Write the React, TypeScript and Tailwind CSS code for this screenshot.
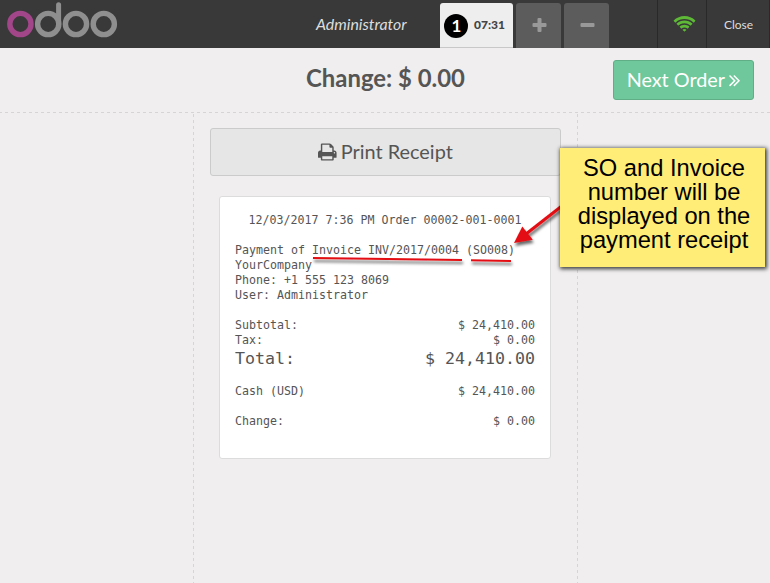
import React from "react";

function Logo() {
  return (
    <svg className="block h-12 w-[125px]" viewBox="0 0 125 48" fill="none" strokeWidth="5.4">
      <g stroke="#8f8f8f">
        <circle cx="48.2" cy="24" r="10.6" />
        <circle cx="76" cy="24" r="10.6" />
        <circle cx="103.8" cy="24" r="10.6" />
        <path d="M58.6 4.8V24" strokeWidth="5" strokeLinecap="round" />
      </g>
      <circle cx="20.4" cy="24" r="10.6" stroke="#a24689" />
    </svg>
  );
}

function PrintIcon() {
  return (
    <svg className="h-5 w-[18.57px] shrink-0" viewBox="0 0 1664 1792" fill="currentColor">
      <path d="M384 1536h896v-256h-896v256zM384 896h896v-384h-160q-40 0-68-28t-28-68v-160h-640v640zM1536 960q0-26-19-45t-45-19-45 19-19 45 19 45 45 19 45-19 19-45zM1664 960v416q0 13-9.5 22.5t-22.5 9.5h-224v160q0 40-28 68t-68 28h-960q-40 0-68-28t-28-68v-160h-224q-13 0-22.500-9.500t-9.500-22.500v-416q0-79 56.500-135.500t135.500-56.500h64v-544q0-40 28-68t68-28h672q40 0 88 20t76 48l152 152q28 28 48 76t20 88v256h64q79 0 135.500 56.500t56.500 135.500z" />
    </svg>
  );
}

function AngleIcon() {
  return (
    <svg className="h-5 w-[11.43px] shrink-0" viewBox="0 0 1024 1792" fill="currentColor">
      <path d="M595 960q0 13-10 23l-466 466q-10 10-23 10t-23-10l-50-50q-10-10-10-23t10-23l393-393-393-393q-10-10-10-23t10-23l50-50q10-10 23-10t23 10l466 466q10 10 10 23zM979 960q0 13-10 23l-466 466q-10 10-23 10t-23-10l-50-50q-10-10-10-23t10-23l393-393-393-393q-10-10-10-23t10-23l50-50q10-10 23-10t23 10l466 466q10 10 10 23z" />
    </svg>
  );
}

function WifiIcon() {
  return (
    <svg className="mt-0.5 h-5 w-[25px]" viewBox="0 0 2240 1792" fill="#5eb937">
      <path d="M1120 1491q-20 0-93-73.500t-73-93.500q0-32 62.500-54t103.500-22 103.500 22 62.500 54q0 20-73 93.500t-93 73.500zM1390 1221q-2 0-40-25t-101.500-50-128.500-25-128.500 25-101 50-40.500 25q-18 0-93.500-75t-75.500-93q0-13 10-23 78-77 196-121t233-44 233 44 196 121q10 10 10 23 0 18-75.500 93t-93.500 75zM1662 950q-11 0-23-8-136-105-252-154.500t-268-49.500q-85 0-170.500 22t-149 53-113.500 62-79 53-31 22q-17 0-92-75t-75-93q0-12 10-22 132-132 320-205t380-73 380 73 320 205q10 10 10 22 0 18-75 93t-92 75zM1936 677q-11 0-22-9-179-157-371.500-236.500t-420.500-79.500-420.500 79.500-371.500 236.500q-11 9-22 9-17 0-92.500-75t-75.500-93q0-13 10-23 187-186 445-288t527-102 527 102 445 288q10 10 10 23 0 18-75.500 93t-92.500 75z" />
    </svg>
  );
}

function Header() {
  return (
    <header className="flex h-12 bg-[#393939] text-[#ddd]">
      <div className="w-[316px]">
        <Logo />
      </div>
      <div className="flex w-[124px] items-center pb-px text-[15.9px] italic">Administrator</div>
      <div className="flex flex-1 items-end gap-[3px]">
        <div className="flex h-[45px] w-[73px] items-center rounded-t-[3px] border-b border-[#c8c8c8] bg-[#eee] pl-1 text-[#444]">
          <span className="mt-0.5 flex size-6 items-center justify-center rounded-full bg-black pl-px text-[17px] font-bold text-white">
            1
          </span>
          <span className="ml-1.5 text-[12px] font-black">07:31</span>
        </div>
        <div className="flex h-[45px] w-[45px] items-center justify-center rounded-t-[3px] bg-[#5c5c5c] pl-px">
          <svg className="size-[15px]" viewBox="0 0 15 15" fill="#999">
            <rect x="0.5" y="5" width="14" height="4" rx="1" />
            <rect x="5.5" y="0" width="4" height="14" rx="1" />
          </svg>
        </div>
        <div className="flex h-[45px] w-[45px] items-center justify-center rounded-t-[3px] bg-[#5c5c5c] pl-px">
          <svg className="size-[15px]" viewBox="0 0 15 15" fill="#999">
            <rect x="0.5" y="5" width="14" height="4" rx="1" />
          </svg>
        </div>
      </div>
      <div className="flex w-[49px] items-center justify-center border-l border-[#292929] pl-1">
        <WifiIcon />
      </div>
      <div className="flex w-16 items-center justify-center border-x border-[#292929] pt-px pl-px text-xs">Close</div>
    </header>
  );
}

function Row({ label, value }: { label: string; value: string }) {
  return (
    <div className="flex justify-between">
      <span>{label}</span>
      <span>{value}</span>
    </div>
  );
}

function Receipt() {
  return (
    <section className="mt-5 mr-[10px] ml-[9px] h-[263px] rounded-[3px] border border-[#dcdcdc] bg-white px-[15px] pt-4 font-['DejaVu_Sans_Mono',monospace] text-[11.63px] leading-[15px] whitespace-pre text-[#555]">
      <p className="text-center">12/03/2017 7:36 PM Order 00002-001-0001</p>
      <div className="mt-[15px]">
        <p>Payment of Invoice INV/2017/0004 (SO008)</p>
        <p>YourCompany</p>
        <p>Phone: +1 555 123 8069</p>
        <p>User: Administrator</p>
      </div>
      <div className="mt-[15px]">
        <Row label="Subtotal:" value="$ 24,410.00" />
        <Row label="Tax:" value="$ 0.00" />
        <div className="text-[16.61px] leading-[21px]">
          <Row label="Total:" value="$ 24,410.00" />
        </div>
      </div>
      <div className="mt-[15px]">
        <Row label="Cash (USD)" value="$ 24,410.00" />
      </div>
      <div className="mt-[15px]">
        <Row label="Change:" value="$ 0.00" />
      </div>
    </section>
  );
}

function Annotations() {
  return (
    <>
      <svg className="absolute top-0 left-0 h-[583px] w-[770px]" viewBox="0 0 770 583">
        <defs>
          <filter id="mark-shadow" x="0" y="0" width="770" height="583" filterUnits="userSpaceOnUse">
            <feDropShadow dx="1" dy="3" stdDeviation="1.8" floodColor="#000" floodOpacity="0.6" />
          </filter>
        </defs>
        <g filter="url(#mark-shadow)" stroke="#e40d12" strokeWidth="2">
          <path d="M313 258L462 260M471 260.2L511 261" />
          <path d="M565 203.500L526 234" strokeWidth="3" />
          <path d="M514 243L522.300 226.500L532.800 239.800Z" fill="#e40d12" stroke="none" />
        </g>
      </svg>
      <div className="absolute top-[148px] left-[560px] h-[119px] w-[205px] bg-[#ffed77] pt-2 pl-[3px] text-center font-['Liberation_Sans',Arial,sans-serif] text-[23.7px] leading-6 text-black shadow-[1px_1px_4px_1px_rgba(0,0,0,0.75)]">
        SO and Invoice
        <br />
        number will be
        <br />
        displayed on the
        <br />
        payment receipt
      </div>
    </>
  );
}

export default function App() {
  return (
    <div className="relative flex h-[583px] w-[770px] flex-col overflow-hidden bg-[#f0eeee] font-[Lato,sans-serif] text-[#555]">
      <Header />
      <div className="flex h-16 pt-3">
        <h1 className="ml-[193px] w-[385px] text-center text-[23.9px] leading-9 font-bold">Change: $ 0.00</h1>
        <button className="ml-[35px] flex h-10 w-[141px] items-center justify-center gap-1 rounded-[3px] border border-[#5fae86] bg-[#6ec89b] text-[19.8px] leading-[30px] text-white">
          <span className="mb-0.5">Next Order</span>
          <AngleIcon />
        </button>
      </div>
      <svg className="h-px w-full shrink-0" viewBox="0 0 770 1">
        <path d="M-1 .5H770" stroke="#d6d4d4" strokeDasharray="3 3" />
      </svg>
      <main className="flex flex-1">
        <div className="w-[193px]" />
        <svg className="h-full w-px" viewBox="0 0 1 470">
          <path d="M.5 1V470" stroke="#d6d4d4" strokeDasharray="3 3" />
        </svg>
        <div className="w-[383px] px-4 pt-[15px]">
          <button className="flex h-12 w-[351px] items-center justify-center gap-1 rounded-[3px] border border-[#cbcbcb] bg-[#e6e6e6] text-[19.9px] leading-[30px]">
            <PrintIcon />
            <span className="mb-0.5">Print Receipt</span>
          </button>
          <Receipt />
        </div>
        <svg className="h-full w-px" viewBox="0 0 1 470">
          <path d="M.5 1V470" stroke="#d6d4d4" strokeDasharray="3 3" />
        </svg>
      </main>
      <Annotations />
    </div>
  );
}
